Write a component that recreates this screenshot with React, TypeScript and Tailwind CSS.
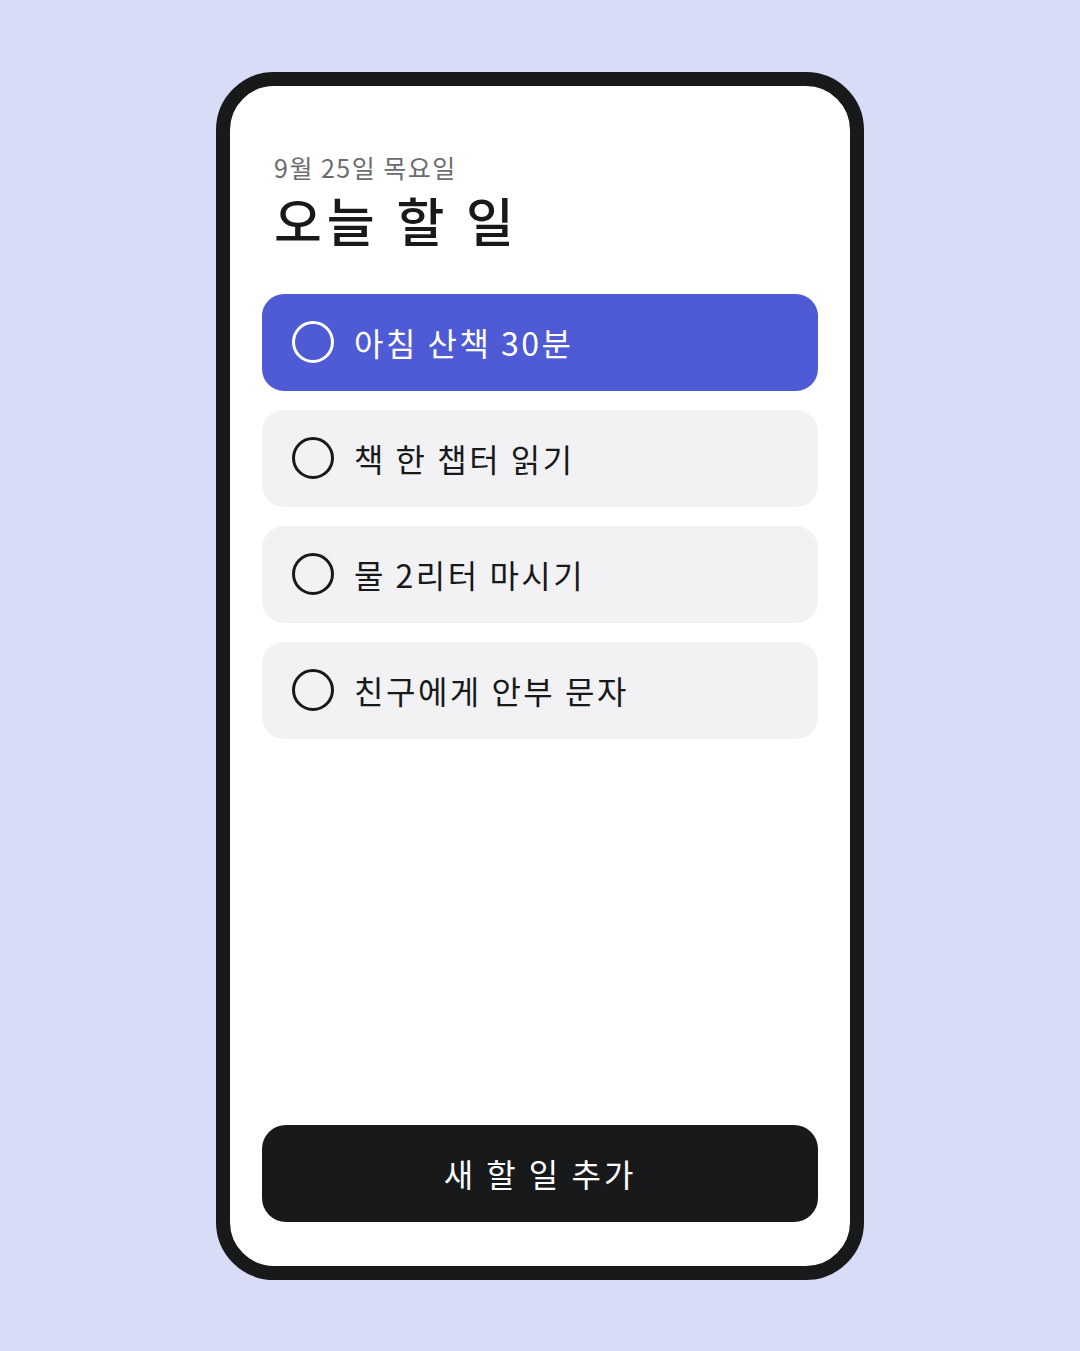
import React from "react";

const tasks = [
  { label: "아침 산책 30분", active: true },
  { label: "책 한 챕터 읽기", active: false },
  { label: "물 2리터 마시기", active: false },
  { label: "친구에게 안부 문자", active: false },
];

export default function App() {
  return (
    <div
      className="w-full min-h-[1351px] bg-[#d9dcf6] flex items-center justify-center"
      style={{ fontFamily: '"Noto Sans CJK KR", "Noto Sans", sans-serif' }}
    >
      <div className="w-[648px] h-[1208px] border-[14px] border-[#18191b] rounded-[58px] bg-white flex flex-col px-8 pb-[44px]">
        <div className="pl-3 pt-[64px]">
          <div className="text-[25px] leading-[34px] text-[#6b6b70] tracking-[1.5px]">9월 25일 목요일</div>
          <div className="mt-[6px] text-[52px] leading-[60px] font-medium text-[#18191b] tracking-[5px]">오늘 할 일</div>
        </div>
        <div className="mt-[44px] flex flex-col gap-[19px]">
          {tasks.map((t) => (
            <div
              key={t.label}
              className={
                t.active
                  ? "h-[97px] rounded-[22px] bg-[#4f5bd5] flex items-center pl-[30px] gap-[20px] text-white"
                  : "h-[97px] rounded-[22px] bg-[#f2f2f4] flex items-center pl-[30px] gap-[20px] text-[#18191b]"
              }
            >
              <div
                className={
                  t.active
                    ? "w-[42px] h-[42px] rounded-full border-[3.5px] border-white"
                    : "w-[42px] h-[42px] rounded-full border-[3.5px] border-[#18191b]"
                }
              />
              <span className="text-[32px] leading-none tracking-[2.5px]">{t.label}</span>
            </div>
          ))}
        </div>
        <div className="flex-1" />
        <button className="h-[97px] w-full rounded-[24px] bg-[#18191b] text-white text-[32px] tracking-[3px] flex items-center justify-center">
          새 할 일 추가
        </button>
      </div>
    </div>
  );
}
